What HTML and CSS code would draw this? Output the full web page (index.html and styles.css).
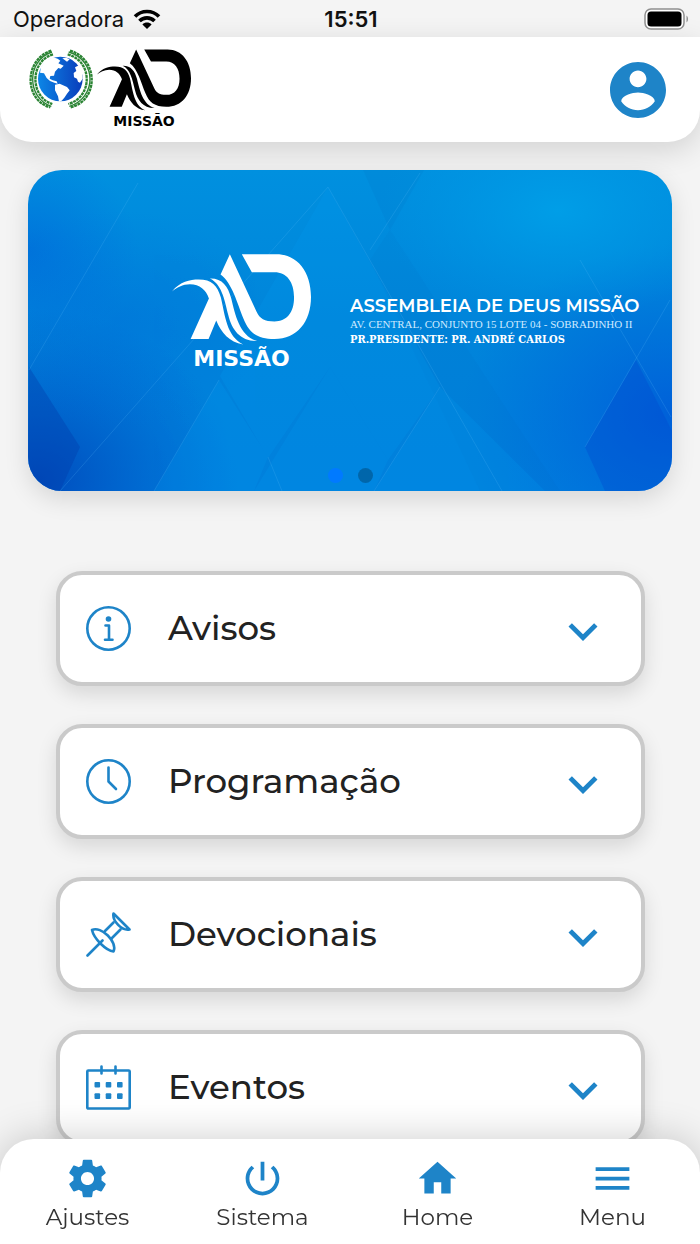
FILE: index.html
```html
<!DOCTYPE html>
<html lang="pt-BR">
<head>
  <meta charset="UTF-8" />
  <meta name="viewport" content="width=device-width, initial-scale=1.0"/>
  <title>Assembleia de Deus Missão</title>
  <link rel="stylesheet" href="styles.css">
</head>
<body>

<!-- Shared logo shape -->
<svg class="sprite" aria-hidden="true">
  <symbol id="ad-logo" viewBox="64 76 418 272">
    <path d="M64 188C88 158 118 152 144 152C184 152 200 170 211 206C224 262 228 322 278 347C236 340 212 312 197 275L174 331H120L175 209C166 182 148 167 118 166C96 166 78 176 64 188Z"/>
    <path d="M178 149C215 148 232 172 242 208C254 258 268 322 320 337C270 338 244 304 233 258C221 208 212 165 178 149Z"/>
    <path d="M238 76L318 248C328 270 342 278 372 278C410 278 431 250 431 206C431 160 410 130 372 130H304L274 76H378C442 76 482 130 482 204C482 280 440 331 372 331C320 331 296 312 279 270C260 224 246 164 210 137Z"/>
  </symbol>
</svg>

<div class="status-bar">
  <div class="carrier">
    <span>Operadora</span>
    <svg class="wifi" viewBox="0 0 28 20" aria-hidden="true">
      <path d="M2 7.500C8.500 .8 19.500 .8 26 7.500M6.500 12C10.600 7.800 17.400 7.800 21.500 12" fill="none" stroke="#000" stroke-width="3.600"/>
      <path d="M14 20l-4.600-4.600c2.500-2.500 6.700-2.500 9.200 0z"/>
    </svg>
  </div>
  <span class="clock">15:51</span>
  <svg class="battery" viewBox="0 0 45 22" aria-hidden="true">
    <rect x="1" y="1" width="39" height="20" rx="6" fill="#fff" stroke="#8f8f8f" stroke-width="1.500"/>
    <rect x="3.500" y="3.500" width="34" height="15" rx="3.500"/>
    <path d="M42.500 7.500c2 1.500 2 5.500 0 7z" fill="#8f8f8f"/>
  </svg>
</div>

<header class="header">
  <a href="#" class="brand" aria-label="Início">
    <svg class="globe" viewBox="88 156 192 180" aria-hidden="true">
      <defs>
        <linearGradient id="sea" x1="0" x2="1">
          <stop offset="0" stop-color="#0c86e6"/>
          <stop offset="1" stop-color="#0a3dbb"/>
        </linearGradient>
      </defs>
      <circle cx="182" cy="246" r="67" fill="url(#sea)"/>
      <g fill="#fff">
        <path d="M124 210l14-19 22-10 14 4 8 6-6 8 16 7-9 9-7-2-10 11-3 12-11 1-2 8 9 5 12 3 3 7-10-3-13-5-10-9-8-14-12-2z"/>
        <path d="M166 263l14-3 22 10 8 10-8 10-8 12-8 9-8 3-3-16-9-18z"/>
        <path d="M188 184l12-2 10 5-8 7z"/>
        <path d="M226 211l12-6 9 18 2 22-8 12-6-3-3-9-9-4-1-13 8-6z"/>
      </g>
      <g fill="none" stroke="#2b8434">
        <path d="M157 165C80 190 80 302 155 328M207 165C292 190 292 302 209 328" stroke-width="4"/>
        <path d="M155 161C73 186 72 310 152 331M211 161C297 186 298 310 213 331" stroke-width="7" stroke-dasharray="9 2"/>
        <path d="M160 172C90 192 90 300 158 321M204 172C280 192 280 300 206 321" stroke-width="7" stroke-dasharray="9 2"/>
      </g>
    </svg>
    <span class="logo logo-dark">
      <svg aria-hidden="true"><use href="#ad-logo"/></svg>
      <span>MISSÃO</span>
    </span>
  </a>
  <button class="profile" aria-label="Perfil">
    <svg viewBox="2 2 20 20"><path d="M12 2C6.480 2 2 6.480 2 12s4.480 10 10 10 10-4.480 10-10S17.520 2 12 2zm0 3c1.660 0 3 1.340 3 3s-1.340 3-3 3-3-1.340-3-3 1.340-3 3-3zm0 14.200c-2.500 0-4.710-1.280-6-3.220.03-1.990 4-3.080 6-3.080 1.990 0 5.970 1.090 6 3.080-1.290 1.940-3.500 3.220-6 3.220z"/></svg>
  </button>
</header>

<main>
  <section class="banner">
    <svg class="banner-bg" viewBox="0 0 644 321" preserveAspectRatio="none" aria-hidden="true">
      <defs>
        <linearGradient id="base" x1="0" y1="0" x2="0" y2="1">
          <stop offset="0" stop-color="#0090df"/>
          <stop offset=".5" stop-color="#0084da"/>
          <stop offset="1" stop-color="#0080dd"/>
        </linearGradient>
        <radialGradient id="deep"><stop offset="0" stop-color="#0044b8"/><stop offset="1" stop-color="#0050c8" stop-opacity="0"/></radialGradient>
        <radialGradient id="royal"><stop offset="0" stop-color="#0058d8"/><stop offset="1" stop-color="#0060dc" stop-opacity="0"/></radialGradient>
        <radialGradient id="light"><stop offset="0" stop-color="#009ee7"/><stop offset="1" stop-color="#0096e4" stop-opacity="0"/></radialGradient>
      </defs>
      <rect width="644" height="321" fill="url(#base)"/>
      <ellipse cx="10" cy="310" rx="200" ry="170" fill="url(#deep)" opacity=".85"/>
      <ellipse cx="0" cy="80" rx="110" ry="100" fill="url(#royal)" opacity=".45"/>
      <ellipse cx="90" cy="150" rx="150" ry="110" fill="url(#royal)" opacity=".25"/>
      <ellipse cx="644" cy="245" rx="210" ry="170" fill="url(#royal)" opacity=".8"/>
      <ellipse cx="530" cy="40" rx="180" ry="110" fill="url(#light)"/>
      <path d="M335 0l27 60 34-60z" fill="#0068c0" opacity=".12"/>
      <path d="M362 60L342 90l110 231h80z" fill="#0068c0" opacity=".08"/>
      <path d="M1 197l51 80-20 44H0z" fill="#0039a8" opacity=".35"/>
      <path d="M608 190l-51 87 20 44h67v-60z" fill="#0048cf" opacity=".35"/>
      <g fill="#009bf0" opacity=".22">
        <path d="M191 210l49 77-14 34H126z"/>
        <path d="M302 197l58 93-14 31H226z"/>
        <path d="M412 217l105 104H346z"/>
        <path d="M300 17L192 206l48 82 62-91 58 93 52-73z"/>
      </g>
      <g fill="none" stroke="#59bdfa" stroke-width="1" opacity=".2">
        <path d="M110 13L1 200M392 3L342 80M300 17L32 321M300 17L474 321M191 210l-65 111M240 287l14 34M412 217l-66 104M642 130l-85 147M552 90l91 157"/>
      </g>
    </svg>
    <div class="banner-content">
      <div class="logo logo-light">
        <svg aria-hidden="true"><use href="#ad-logo"/></svg>
        <span>MISSÃO</span>
      </div>
      <div class="banner-text">
        <h1>ASSEMBLEIA DE DEUS MISSÃO</h1>
        <p class="address">AV. CENTRAL, CONJUNTO 15 LOTE 04 - SOBRADINHO II</p>
        <p class="pastor">PR.PRESIDENTE: PR. ANDRÉ CARLOS</p>
      </div>
    </div>
    <div class="dots">
      <button class="active" aria-label="Slide 1"></button>
      <button aria-label="Slide 2"></button>
    </div>
  </section>

  <section class="cards">
    <button class="card" aria-expanded="false">
      <svg class="card-icon" viewBox="0 0 45 45" aria-hidden="true">
        <circle cx="22.500" cy="22.500" r="21.200"/>
        <path d="M19.500 19.500h3.500v14M19 33.800h7.500"/>
        <circle class="solid" cx="22.500" cy="13" r="2.800"/>
      </svg>
      <span>Avisos</span>
      <svg class="chevron" viewBox="0 -1 24 24" aria-hidden="true"><path d="M7.410 8.590L12 13.170l4.590-4.580L18 10l-6 6-6-6z"/></svg>
    </button>

    <button class="card" aria-expanded="false">
      <svg class="card-icon" viewBox="0 0 45 45" aria-hidden="true">
        <circle cx="22.500" cy="22.500" r="21.200"/>
        <path d="M22.500 8.500v14l7.500 7.500"/>
      </svg>
      <span>Programação</span>
      <svg class="chevron" viewBox="0 -1 24 24" aria-hidden="true"><path d="M7.410 8.590L12 13.170l4.590-4.580L18 10l-6 6-6-6z"/></svg>
    </button>

    <button class="card" aria-expanded="false">
      <svg class="card-icon" viewBox="0 0 45 45" aria-hidden="true">
        <path d="M27.500 1.500l16 16C36 19 26 9 27.500 1.500z"/>
        <path d="M27.500 10.500l-8.500 8.500M34.500 17.500l-8.500 8.500"/>
        <path d="M6 18C15 13.500 32 30 27.500 39.500C20 38.500 8 27 6 18z"/>
        <path d="M16.500 28.500L1.500 43.500"/>
      </svg>
      <span>Devocionais</span>
      <svg class="chevron" viewBox="0 -1 24 24" aria-hidden="true"><path d="M7.410 8.590L12 13.170l4.590-4.580L18 10l-6 6-6-6z"/></svg>
    </button>

    <button class="card" aria-expanded="false">
      <svg class="card-icon" viewBox="0 0 45 45" aria-hidden="true">
        <rect x="1.300" y="5.500" width="42.400" height="38" rx="1"/>
        <path d="M15.500 1.500v7M29.500 1.500v7"/>
        <g class="solid">
          <rect x="8.500" y="17" width="5.600" height="5.600" rx="1"/><rect x="19.700" y="17" width="5.600" height="5.600" rx="1"/><rect x="31" y="17" width="5.600" height="5.600" rx="1"/>
          <rect x="8.500" y="28.300" width="5.600" height="5.600" rx="1"/><rect x="19.700" y="28.300" width="5.600" height="5.600" rx="1"/><rect x="31" y="28.300" width="5.600" height="5.600" rx="1"/>
        </g>
      </svg>
      <span>Eventos</span>
      <svg class="chevron" viewBox="0 -1 24 24" aria-hidden="true"><path d="M7.410 8.590L12 13.170l4.590-4.580L18 10l-6 6-6-6z"/></svg>
    </button>
  </section>
</main>

<nav class="bottom-nav">
  <a href="#ajustes">
    <svg viewBox="0 0 24 24" aria-hidden="true"><path d="M19.430 12.980c.04-.32.07-.64.07-.98s-.03-.66-.07-.98l2.110-1.650c.19-.15.24-.42.12-.64l-2-3.460c-.12-.22-.39-.3-.61-.22l-2.490 1c-.52-.4-1.080-.73-1.690-.98l-.38-2.650C14.460 2.180 14.250 2 14 2h-4c-.25 0-.46.18-.49.42l-.38 2.650c-.61.25-1.170.59-1.690.98l-2.490-1c-.23-.09-.49 0-.61.22l-2 3.460c-.13.22-.07.49.12.64l2.110 1.650c-.04.32-.07.65-.07.98s.03.66.07.98l-2.110 1.650c-.19.15-.24.42-.12.64l2 3.460c.12.22.39.3.61.22l2.490-1c.52.4 1.080.73 1.690.98l.38 2.650c.03.24.24.42.49.42h4c.25 0 .46-.18.49-.42l.38-2.650c.61-.25 1.170-.59 1.690-.98l2.490 1c.23.09.49 0 .61-.22l2-3.460c.12-.22.07-.49-.12-.64l-2.110-1.650zM12 15.500c-1.930 0-3.500-1.570-3.500-3.500s1.570-3.500 3.500-3.500 3.500 1.570 3.500 3.500-1.570 3.500-3.500 3.500z"/></svg>
    <span>Ajustes</span>
  </a>
  <a href="#sistema">
    <svg viewBox="0 0 24 24" aria-hidden="true"><path d="M13 3h-2v10h2V3zm4.830 2.170l-1.420 1.420C17.990 7.860 19 9.810 19 12c0 3.870-3.130 7-7 7s-7-3.130-7-7c0-2.190 1.010-4.140 2.580-5.420L6.170 5.170C4.230 6.820 3 9.260 3 12c0 4.970 4.030 9 9 9s9-4.030 9-9c0-2.740-1.230-5.180-3.170-6.830z"/></svg>
    <span>Sistema</span>
  </a>
  <a href="#home">
    <svg viewBox="0 0 24 24" aria-hidden="true"><path d="M10 20v-6h4v6h5v-8h3L12 3 2 12h3v8z"/></svg>
    <span>Home</span>
  </a>
  <a href="#menu">
    <svg viewBox="0 0 24 24" aria-hidden="true"><path d="M3 18h18v-2H3v2zm0-5h18v-2H3v2zm0-7v2h18V6H3z"/></svg>
    <span>Menu</span>
  </a>
</nav>

</body>
</html>
```

FILE: styles.css
```css
* {
  box-sizing: border-box;
}

body {
  margin: 0;
  min-height: 100vh;
  background: #f4f4f4;
  color: #222;
  font-family: Montserrat, 'Inter', sans-serif;
}

svg {
  display: block;
}

button {
  padding: 0;
  border: none;
  background: none;
  font: inherit;
  color: inherit;
  cursor: pointer;
}

a {
  color: inherit;
  text-decoration: none;
}

.sprite {
  position: absolute;
  width: 0;
  height: 0;
}

/* Status bar */
.status-bar {
  display: grid;
  grid-template-columns: 1fr auto 1fr;
  align-items: center;
  height: 37px;
  padding: 0 11px 0 13px;
  font-family: 'Inter', sans-serif;
  font-size: 22px;
  color: #111;
}

.carrier {
  display: flex;
  align-items: center;
  gap: 9px;
}

.wifi {
  width: 28px;
  height: 20px;
}

.clock {
  font-weight: 600;
}

.battery {
  width: 45px;
  height: 22px;
  justify-self: end;
}

/* Header */
.header {
  display: flex;
  justify-content: space-between;
  align-items: center;
  height: 105px;
  padding: 0 34px 0 29px;
  background: #fff;
  border-radius: 0 0 32px 32px;
  box-shadow: 0 8px 30px rgba(0, 0, 0, 0.14);
}

.brand {
  display: flex;
  gap: 4px;
}

.globe {
  width: 64px;
  height: 60px;
}

.logo {
  display: flex;
  flex-direction: column;
  align-items: center;
  font-family: 'DejaVu Sans', sans-serif;
  font-weight: bold;
}

.logo-dark {
  color: #000;
  font-size: 14px;
  line-height: 20px;
}

.logo-dark svg {
  width: 94px;
  height: 62px;
}

.profile svg {
  width: 56px;
  height: 56px;
  fill: #1e84c8;
}

main {
  padding: 28px 28px 96px;
}

/* Banner */
.banner {
  position: relative;
  display: flex;
  flex-direction: column;
  aspect-ratio: 644 / 321;
  border-radius: 34px;
  overflow: hidden;
  color: #fff;
  box-shadow: 0 8px 24px rgba(0, 0, 0, 0.12);
}

.banner-bg {
  position: absolute;
  width: 100%;
  height: 100%;
}

.banner-content {
  position: relative;
  flex: 1;
  display: flex;
  align-items: center;
  gap: 39px;
  padding: 0 0 12px 144px;
  white-space: nowrap;
}

.logo-light {
  font-size: 22px;
  line-height: 28px;
}

.logo-light svg {
  width: 139px;
  height: 91px;
  fill: #fff;
}

.banner-text {
  padding-top: 18px;
}

.banner-text h1 {
  margin: 0;
  font-size: 18px;
  font-weight: 600;
  line-height: 20px;
}

.banner-text p {
  margin: 0;
  line-height: 16px;
}

.banner-text .address {
  font-family: 'Liberation Serif', serif;
  font-size: 11px;
  color: #cfeaff;
}

.banner-text .pastor {
  font-family: 'DejaVu Serif Condensed', 'DejaVu Serif', serif;
  font-size: 11px;
  font-weight: bold;
}

.dots {
  position: relative;
  display: flex;
  justify-content: center;
  gap: 15px;
  padding-bottom: 8px;
}

.dots button {
  width: 15px;
  height: 15px;
  border-radius: 50%;
  background: rgba(0, 0, 0, 0.24);
}

.dots .active {
  background: #007aff;
}

/* Cards */
.cards {
  display: flex;
  flex-direction: column;
  gap: 38px;
  margin: 80px 27px 0 28px;
}

.card {
  display: flex;
  align-items: center;
  height: 115px;
  padding: 0 29px 0 26px;
  border: 4px solid #cacaca;
  border-radius: 26px;
  background: #fff;
  box-shadow: 0 8px 20px rgba(0, 0, 0, 0.12);
  font-size: 34px;
  font-weight: 500;
  line-height: 40px;
  text-align: left;
}

.card span {
  flex: 1;
  padding: 0 0 2px 37px;
}

.card-icon {
  width: 45px;
  height: 45px;
  fill: none;
  stroke: #1e84c8;
  stroke-width: 2.6;
  stroke-linecap: round;
  stroke-linejoin: round;
}

.card-icon .solid {
  fill: #1e84c8;
  stroke: none;
}

.chevron {
  width: 58px;
  height: 58px;
  fill: #1e84c8;
}

/* Bottom navigation */
.bottom-nav {
  position: fixed;
  left: 0;
  right: 0;
  bottom: 0;
  display: flex;
  height: 105px;
  padding-top: 17px;
  background: #fff;
  border-radius: 34px 34px 0 0;
  box-shadow: 0 0 40px rgba(0, 0, 0, 0.2);
}

.bottom-nav a {
  flex: 1;
  display: flex;
  flex-direction: column;
  align-items: center;
  gap: 2px;
  color: #333;
  font-size: 23px;
  font-weight: 400;
  line-height: 28px;
}

.bottom-nav svg {
  width: 45px;
  height: 45px;
  fill: #1e84c8;
}
```
